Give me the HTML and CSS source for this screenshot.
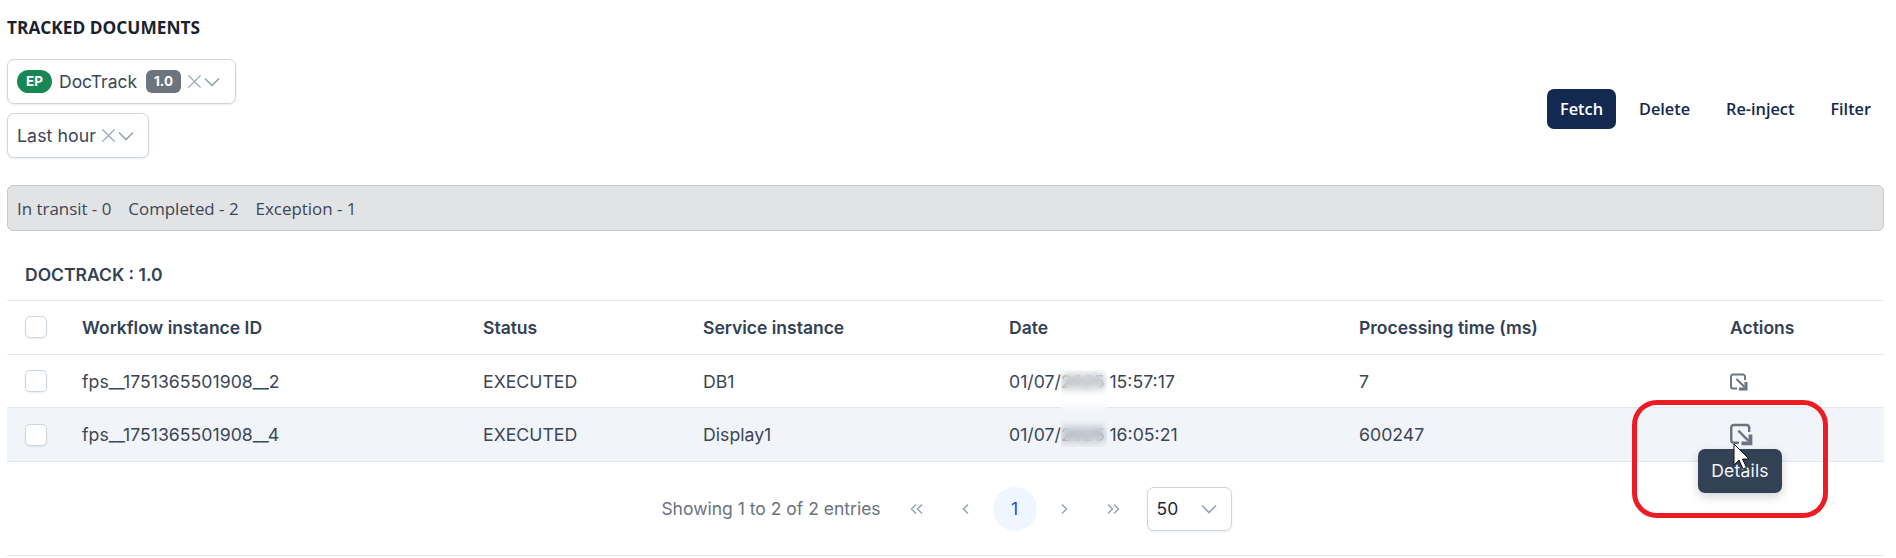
FILE: index.html
```html
<!DOCTYPE html>
<html lang="en">
<head>
<meta charset="utf-8">
<title>Tracked documents</title>
<link rel="stylesheet" href="styles.css">
</head>
<body>
<main class="page">
  <h1 class="title">TRACKED DOCUMENTS</h1>
  <section class="toolbar">
    <div class="filters">
      <div class="select select-app">
        <span class="pill">EP</span>
        <span class="select-name">DocTrack</span>
        <span class="version">1.0</span>
        <svg class="ico-x" viewBox="0 0 16 16"><path d="M1.5 1.5l13 13M14.5 1.5l-13 13"/></svg>
        <svg class="ico-chev" viewBox="0 0 16 10"><path d="M1 1.5l7 7 7-7"/></svg>
      </div>
      <div class="select select-time">
        <span class="select-name">Last hour</span>
        <svg class="ico-x" viewBox="0 0 16 16"><path d="M1.5 1.5l13 13M14.5 1.5l-13 13"/></svg>
        <svg class="ico-chev" viewBox="0 0 16 10"><path d="M1 1.5l7 7 7-7"/></svg>
      </div>
    </div>
    <div class="actions">
      <button class="btn btn-primary">Fetch</button>
      <button class="btn">Delete</button>
      <button class="btn">Re-inject</button>
      <button class="btn">Filter</button>
    </div>
  </section>
  <div class="status"><span>In transit - 0</span><span>Completed - 2</span><span>Exception - 1</span></div>
  <h2 class="subtitle">DOCTRACK : 1.0</h2>
  <table class="grid">
    <thead>
      <tr>
        <th class="c-check"><span class="check"></span></th>
        <th class="c-id">Workflow instance ID</th>
        <th class="c-status">Status</th>
        <th class="c-service">Service instance</th>
        <th class="c-date">Date</th>
        <th class="c-time">Processing time (ms)</th>
        <th class="c-act">Actions</th>
      </tr>
    </thead>
    <tbody>
      <tr>
        <td class="c-check"><span class="check"></span></td>
        <td>fps__1751365501908__2</td>
        <td>EXECUTED</td>
        <td>DB1</td>
        <td>01/07/2025 15:57:17</td>
        <td>7</td>
        <td><svg class="ico-detail" viewBox="0 0 18 18"><path class="o" d="M15 7V3.500a2 2 0 0 0-2-2H3a2 2 0 0 0-2 2v10a2 2 0 0 0 2 2h4"/><path class="o" d="M6.500 6l8 8"/><path class="f" d="M17.500 9h-3v5.500H9v3h8.500z"/></svg></td>
      </tr>
      <tr class="hover">
        <td class="c-check"><span class="check"></span></td>
        <td>fps__1751365501908__4</td>
        <td>EXECUTED</td>
        <td>Display1</td>
        <td>01/07/2025 16:05:21</td>
        <td>600247</td>
        <td class="act-cell"><svg class="ico-detail ico-big" viewBox="0 0 18 18"><path class="o" d="M15 7V3.500a2 2 0 0 0-2-2H3a2 2 0 0 0-2 2v10a2 2 0 0 0 2 2h4"/><path class="o" d="M6.500 6l8 8"/><path class="f" d="M17.500 9h-3v5.500H9v3h8.500z"/></svg><div class="tooltip">Details</div></td>
      </tr>
    </tbody>
  </table>
  <nav class="pager">
    <span class="pager-info">Showing 1 to 2 of 2 entries</span>
    <div class="pager-links">
      <span class="pg"><svg viewBox="0 0 14 12"><path d="M6 1.500L1.500 6 6 10.500M12 1.500L7.500 6l4.500 4.500"/></svg></span>
      <span class="pg"><svg viewBox="0 0 14 12"><path d="M9 1.500L4.500 6 9 10.500"/></svg></span>
      <span class="pg pg-on">1</span>
      <span class="pg"><svg viewBox="0 0 14 12"><path d="M5 1.500L9.500 6 5 10.500"/></svg></span>
      <span class="pg"><svg viewBox="0 0 14 12"><path d="M2 1.500L6.500 6 2 10.500M8 1.500L12.500 6 8 10.500"/></svg></span>
    </div>
    <div class="per-page"><span>50</span><svg class="ico-chev" viewBox="0 0 16 10"><path d="M1 1.500l7 7 7-7"/></svg></div>
  </nav>
</main>
<div class="blur-mask"></div>
<div class="callout"></div>
<svg class="cursor" viewBox="0 0 18 28"><path d="M1 1v21l5-5 4 9 3.500-1.500-4-8.500H16z"/></svg>
</body>
</html>
```
FILE: styles.css
```css
* { box-sizing: border-box; }
html, body { margin: 0; height: 558px; overflow: hidden; background: #fff; }
body { font-family: Inter, "Noto Sans", sans-serif; font-size: 17.500px; color: #334155; position: relative; }
svg { display: block; }
.page { padding: 0 12px 0 7px; }

.title { margin: 0; padding-top: 17px; height: 59px; font: 700 17.300px/22px "Open Sans", sans-serif; color: #1a2230; }
.toolbar { display: flex; justify-content: space-between; align-items: center; }
.filters { display: flex; flex-direction: column; align-items: flex-start; gap: 9px; }
.select { height: 45px; display: flex; align-items: center; background: #fff; border: 1px solid #cbd5e1; border-radius: 7px; box-shadow: 0 1px 2px rgba(15, 23, 42, .08); padding-left: 9px; }
.select-app { width: 229px; }
.select-time { width: 142px; }
.pill { flex: none; width: 35px; height: 23px; border-radius: 12px; background: #198754; color: #fff; font-size: 13.500px; font-weight: 700; line-height: 23px; text-align: center; margin-right: 8px; }
.select-name { color: #3b4658; font-size: 17.500px; white-space: nowrap; }
.select-app .select-name { margin-left: -1px; }
.select-time .select-name { font-size: 17.700px; letter-spacing: .1px; margin-right: 5px; }
.version { flex: none; width: 35px; height: 23px; border-radius: 6px; background: #6c757d; color: #fff; font-size: 13.500px; font-weight: 700; line-height: 23px; text-align: center; margin: 0 6px 0 9px; }
.ico-x { flex: none; width: 15px; height: 15px; fill: none; stroke: #94a3b8; stroke-width: 1.400; }
.ico-chev { flex: none; width: 16px; height: 10px; margin-left: 2px; fill: none; stroke: #94a3b8; stroke-width: 1.600; }

.actions { display: flex; gap: 10px; }
.btn { height: 40px; border: 0; background: none; border-radius: 7px; padding: 0 13px; font: 600 16.300px "Open Sans", sans-serif; color: #14294f; }
.btn-primary { background: #14294f; color: #fff; }

.status { margin-top: 27px; height: 46px; display: flex; align-items: center; gap: 17px; padding-left: 9px; background: #e2e3e5; border: 1px solid #c8c9cc; border-radius: 6px; color: #3b4658; font: 400 16.900px "Open Sans", sans-serif; }

.subtitle { margin: 0; padding: 32px 0 0 18px; height: 69px; font-size: 17.500px; line-height: 24px; font-weight: 600; color: #334155; }

.grid { width: 1877px; border-collapse: collapse; table-layout: fixed; border-top: 1px solid #e2e8f0; }
.grid th, .grid td { padding: 0; height: 53.700px; text-align: left; border-bottom: 1px solid #e2e8f0; white-space: nowrap; }
.grid th { font-weight: 600; color: #334155; }
.grid td { color: #3b4658; font-size: 17.700px; }
.c-check { width: 75px; padding-left: 18px !important; }
.c-id { width: 401px; }
.c-status { width: 220px; }
.c-service { width: 306px; }
.c-date { width: 350px; }
.c-time { width: 371px; }
.hover td { background: #f1f4f9; }
.check { display: block; width: 22px; height: 22px; border: 1px solid #cbd5e1; border-radius: 5px; background: #fff; box-shadow: 0 1px 2px rgba(15, 23, 42, .08); }
.ico-detail { width: 18px; height: 18px; margin-top: 1px; }
.ico-detail .o { fill: none; stroke: #6b7280; stroke-width: 1.900; }
.ico-detail .f { fill: #6b7280; }
.ico-big { width: 23px; height: 23px; margin-top: -1px; }
.act-cell { position: relative; }
.tooltip { position: absolute; left: -32px; top: 41px; width: 84px; height: 44px; border-radius: 7px; background: #334155; color: #f1f5f9; font: 400 17.500px/44px Inter, sans-serif; letter-spacing: .2px; text-align: center; box-shadow: 0 4px 10px rgba(15, 23, 42, .18); z-index: 2; }

.pager { height: 94px; display: flex; align-items: center; justify-content: center; padding-left: 2px; border-bottom: 1px solid #e2e8f0; }
.pager-info { color: #6b7280; }
.pager-links { display: flex; gap: 5px; margin: 0 12px 0 14px; }
.pg { width: 44px; height: 44px; border-radius: 50%; display: flex; align-items: center; justify-content: center; color: #1d4ed8; }
.pg svg { width: 14px; height: 12px; fill: none; stroke: #94a3b8; stroke-width: 1.500; }
.pg-on { background: #eff6ff; }
.per-page { width: 85px; height: 44px; display: flex; align-items: center; justify-content: space-between; padding: 0 14px 0 9px; border: 1px solid #cbd5e1; border-radius: 7px; box-shadow: 0 1px 2px rgba(15, 23, 42, .08); color: #1f2937; }

.blur-mask { position: absolute; left: 1061px; top: 370px; width: 46px; height: 77px; backdrop-filter: blur(4px); }
.callout { position: absolute; left: 1632px; top: 400px; width: 196px; height: 118px; border: 5px solid #ed1c24; border-radius: 25px; z-index: 3; }
.cursor { position: absolute; left: 1733px; top: 443px; width: 18px; height: 28px; fill: #fff; stroke: #111; stroke-width: 1; z-index: 4; }
```
